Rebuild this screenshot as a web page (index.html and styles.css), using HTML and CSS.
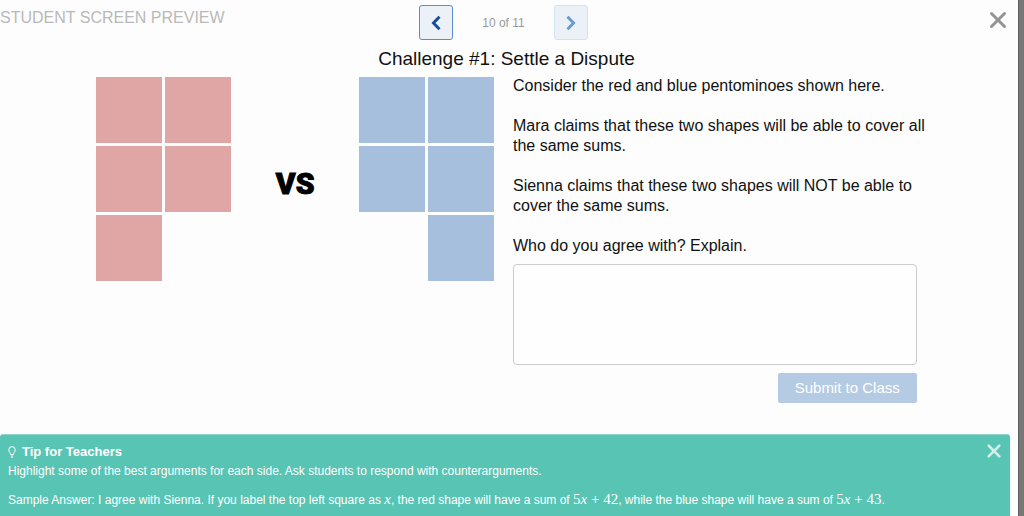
FILE: index.html
```html
<!DOCTYPE html>
<html lang="en">
<head>
<meta charset="utf-8">
<meta name="viewport" content="width=device-width, initial-scale=1">
<title>Student Screen Preview</title>
<link rel="stylesheet" href="styles.css">
</head>
<body>
<div class="sheet">
  <header class="topbar">
    <h1 class="topbar-title">STUDENT SCREEN PREVIEW</h1>
    <nav class="pager" aria-label="Screens">
      <button class="pager-button" type="button" aria-label="Previous screen">
        <svg width="12" height="16" viewBox="0 0 12 16"><path d="M9.500 1.800 3.500 8 9.500 14.200"/></svg>
      </button>
      <span class="pager-count">10 of 11</span>
      <button class="pager-button pager-next" type="button" aria-label="Next screen">
        <svg width="12" height="16" viewBox="0 0 12 16"><path d="M2.500 1.800 8.500 8 2.500 14.200"/></svg>
      </button>
    </nav>
    <button class="close" type="button" aria-label="Close preview">
      <svg width="18" height="18" viewBox="0 0 18 18"><path d="M2.500 2.500 15.500 15.500M15.500 2.500 2.500 15.500"/></svg>
    </button>
  </header>

  <main class="screen">
    <h2 class="screen-title">Challenge #1: Settle a Dispute</h2>
    <div class="columns">
      <div class="figure">
        <div class="shape shape-red">
          <span class="cell"></span><span class="cell"></span>
          <span class="cell"></span><span class="cell"></span>
          <span class="cell"></span>
        </div>
        <span class="versus">VS</span>
        <div class="shape shape-blue">
          <span class="cell"></span><span class="cell"></span>
          <span class="cell"></span><span class="cell"></span>
          <span class="cell cell-right"></span>
        </div>
      </div>
      <form class="question">
        <p>Consider the red and blue pentominoes shown here.</p>
        <p>Mara claims that these two shapes will be able to cover all the same sums.</p>
        <p>Sienna claims that these two shapes will NOT be able to cover the same sums.</p>
        <label for="answer">Who do you agree with? Explain.</label>
        <textarea id="answer" class="answer"></textarea>
        <button class="submit" type="button">Submit to Class</button>
      </form>
    </div>
  </main>

  <aside class="tip">
    <div class="tip-body">
      <h3 class="tip-title">
        <svg width="8" height="12" viewBox="0 0 8 12"><path d="M2.600 8.500C2.600 6.800 .800 6 .800 3.800a3.200 3.200 0 0 1 6.400 0C7.200 6 5.400 6.800 5.400 8.500ZM2.800 10h2.400M3.300 11.300h1.400"/></svg>
        Tip for Teachers
      </h3>
      <p>Highlight some of the best arguments for each side. Ask students to respond with counterarguments.</p>
      <p class="sample">Sample Answer: I agree with Sienna. If you label the top left square as <span class="math"><i>x</i></span>, the red shape will have a sum of <span class="math">5<i>x</i> + 42</span>, while the blue shape will have a sum of <span class="math">5<i>x</i> + 43</span>.</p>
    </div>
    <button class="close tip-close" type="button" aria-label="Close tip">
      <svg width="16" height="16" viewBox="0 0 18 18"><path d="M3 3 15 15M15 3 3 15"/></svg>
    </button>
  </aside>
</div>
<div class="backdrop"></div>
</body>
</html>
```
FILE: styles.css
```css
* {
  box-sizing: border-box;
}

body {
  display: flex;
  min-height: 100vh;
  margin: 0;
  background: #fdfdfd;
  color: #111;
  font-family: "Liberation Sans", Arial, sans-serif;
  font-size: 16px;
  line-height: 20px;
}

h1, h2, h3, p {
  margin: 0;
  font-weight: 400;
}

button {
  padding: 0;
  border: 0;
  background: none;
  font: inherit;
}

svg {
  display: block;
  fill: none;
  stroke: currentColor;
}

.sheet {
  display: flex;
  flex: 1;
  flex-direction: column;
}

.backdrop {
  width: 6px;
  background: #777;
  border-left: 1px solid #606060;
}

.topbar {
  display: grid;
  grid-template-columns: 1fr auto 1fr;
  padding: 5px 11px 0 0;
}

.topbar-title {
  padding-top: 3px;
  color: #b9b9b9;
  font-size: 16px;
}

.pager {
  display: flex;
  align-items: center;
  gap: 29px;
}

.pager-button {
  display: grid;
  place-items: center;
  width: 34px;
  height: 35px;
  border: 1px solid #5b8dc9;
  border-radius: 3px;
  background: #ecf1f8;
  color: #15509f;
  stroke-width: 3;
}

.pager-next {
  border-color: #d3e2f0;
  color: #6c9bce;
}

.pager-count {
  color: #999;
  font-size: 12px;
}

.close {
  align-self: start;
  justify-self: end;
  padding-top: 6px;
  color: #949494;
  stroke-width: 3;
  stroke-linecap: round;
}

.screen {
  flex: 1;
  padding: 7px 5px 0 0;
}

.screen-title {
  font-size: 19px;
  line-height: 24px;
  text-align: center;
}

.columns {
  display: grid;
  grid-template-columns: 398fr 404fr;
  gap: 19px;
  width: 81%;
  margin: 0 auto;
  padding-top: 5px;
}

.figure {
  display: flex;
  align-items: center;
  align-self: start;
  justify-content: space-between;
  padding-top: 1px;
}

.shape {
  display: grid;
  grid-template-columns: 66px 66px;
  gap: 3px;
}

.cell {
  height: 66px;
}

.cell-right {
  grid-column: 2;
}

.shape-red .cell {
  background: #e0a5a5;
}

.shape-blue .cell {
  background: #a5bfdd;
}

.versus {
  padding-top: 10px;
  color: #000;
  font-family: Roboto, sans-serif;
  font-size: 30px;
  font-weight: 900;
  line-height: 32px;
  -webkit-text-stroke: 1px #000;
}

.question {
  display: flex;
  flex-direction: column;
}

.question p {
  margin: 0 -12px 20px 0;
}

.answer {
  height: 101px;
  margin-top: 8px;
  padding: 8px;
  border: 1px solid #ccc;
  border-radius: 4px;
  background: #fefefe;
  font: inherit;
  resize: none;
}

.submit {
  align-self: flex-end;
  height: 30px;
  margin-top: 8px;
  padding: 0 17px;
  border-radius: 2px;
  background: #b5cbe3;
  color: #fff;
  font-size: 15px;
}

.tip {
  display: flex;
  align-items: flex-start;
  justify-content: space-between;
  margin-right: 8px;
  padding: 8px 8px 6px;
  border-top: 1px solid #8fd6ca;
  border-radius: 3px 3px 0 0;
  background: #58c4b4;
  color: #fff;
  font-size: 12px;
}

.tip-title {
  display: flex;
  align-items: center;
  gap: 6px;
  height: 18px;
  font-size: 13px;
  font-weight: 700;
}

.sample {
  padding-top: 8px;
}

.math {
  font-family: "Liberation Serif", "Times New Roman", serif;
  font-size: 15px;
}

.tip-close {
  padding-top: 0;
  color: #d3f0eb;
}
```
